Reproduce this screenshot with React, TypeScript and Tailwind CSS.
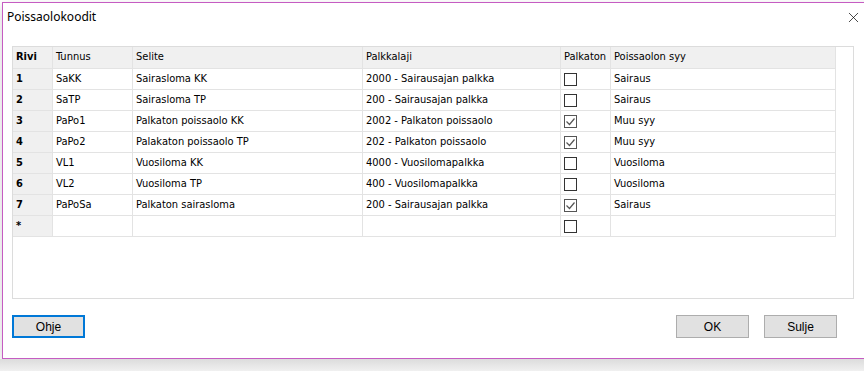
import { X } from 'lucide-react';

type Row = {
  rivi: string;
  tunnus: string;
  selite: string;
  palkkalaji: string;
  palkaton: boolean;
  syy: string;
};

const rows: Row[] = [
  { rivi: '1', tunnus: 'SaKK', selite: 'Sairasloma KK', palkkalaji: '2000 - Sairausajan palkka', palkaton: false, syy: 'Sairaus' },
  { rivi: '2', tunnus: 'SaTP', selite: 'Sairasloma TP', palkkalaji: '200 - Sairausajan palkka', palkaton: false, syy: 'Sairaus' },
  { rivi: '3', tunnus: 'PaPo1', selite: 'Palkaton poissaolo KK', palkkalaji: '2002 - Palkaton poissaolo', palkaton: true, syy: 'Muu syy' },
  { rivi: '4', tunnus: 'PaPo2', selite: 'Palakaton poissaolo TP', palkkalaji: '202 - Palkaton poissaolo', palkaton: true, syy: 'Muu syy' },
  { rivi: '5', tunnus: 'VL1', selite: 'Vuosiloma KK', palkkalaji: '4000 - Vuosilomapalkka', palkaton: false, syy: 'Vuosiloma' },
  { rivi: '6', tunnus: 'VL2', selite: 'Vuosiloma TP', palkkalaji: '400 - Vuosilomapalkka', palkaton: false, syy: 'Vuosiloma' },
  { rivi: '7', tunnus: 'PaPoSa', selite: 'Palkaton sairasloma', palkkalaji: '200 - Sairausajan palkka', palkaton: true, syy: 'Sairaus' },
];

const cols = 'grid grid-cols-[40px_80px_230px_198px_50px_225px] w-[823px]';
const cell = 'border-r border-b border-[#e3e3e3] pl-[3px] flex items-center overflow-hidden whitespace-nowrap';

const CheckBox = ({ checked }: { checked: boolean }) => (
  <div
    className={`w-[13px] h-[13px] bg-white border flex items-center justify-center ${
      checked ? 'border-[#555]' : 'border-[#333]'
    }`}
  >
    {checked && (
      <svg width="11" height="11" viewBox="0 0 11 11">
        <polyline points="1.5,5.5 4.5,8.5 9.5,2.5" fill="none" stroke="#555" strokeWidth="1.2" />
      </svg>
    )}
  </div>
);

const Button = ({ label, focused }: { label: string; focused?: boolean }) => (
  <div
    className={`w-[73px] h-[23px] bg-[#e1e1e1] flex items-center justify-center text-[12px] text-black ${
      focused ? 'border-2 border-[#0078d7]' : 'border border-[#adadad]'
    }`}
    style={{ fontFamily: '"Liberation Sans", Arial, sans-serif' }}
  >
    {label}
  </div>
);

export default function App() {
  return (
    <div className="w-[864px] h-[371px] bg-white overflow-hidden flex flex-col">
      <div className="pl-[2px] pt-[2px]">
        <div className="w-[900px] h-[357px] border-l border-t border-b border-[#c55cc2] bg-white flex flex-col shadow-[0_4px_10px_rgba(0,0,0,0.18)]">
          {/* title bar */}
          <div className="h-[27px] flex items-center justify-between pl-[4px] w-[861px]">
            <span
              className="text-[12px] text-black"
              style={{ fontFamily: '"Noto Sans", "Open Sans", sans-serif' }}
            >
              Poissaolokoodit
            </span>
            <X size={17} strokeWidth={1} className="text-black mr-[2px] mt-[1px]" />
          </div>

          {/* grid panel */}
          <div
            className="ml-[9px] mt-[16px] w-[842px] h-[253px] border border-[#dcdcdc] bg-white text-[11px] text-black"
            style={{ fontFamily: '"DejaVu Sans Condensed", "DejaVu Sans", sans-serif' }}
          >
            <div className={`${cols} h-[22px] bg-[#f0f0f0]`}>
              <div className={`${cell} font-bold`}>Rivi</div>
              <div className={cell}>Tunnus</div>
              <div className={cell}>Selite</div>
              <div className={cell}>Palkkalaji</div>
              <div className={`${cell} pl-[2px]`}>Palkaton</div>
              <div className={cell}>Poissaolon syy</div>
            </div>
            {rows.map((r) => (
              <div key={r.rivi} className={`${cols} h-[21px]`}>
                <div className={`${cell} font-bold bg-[#f0f0f0]`}>{r.rivi}</div>
                <div className={cell}>{r.tunnus}</div>
                <div className={cell}>{r.selite}</div>
                <div className={cell}>{r.palkkalaji}</div>
                <div className={cell}>
                  <CheckBox checked={r.palkaton} />
                </div>
                <div className={cell}>{r.syy}</div>
              </div>
            ))}
            <div className={`${cols} h-[21px]`}>
              <div className={`${cell} font-bold bg-[#f0f0f0]`}>*</div>
              <div className={cell} />
              <div className={cell} />
              <div className={cell} />
              <div className={cell}>
                <CheckBox checked={false} />
              </div>
              <div className={cell} />
            </div>
          </div>

          {/* buttons */}
          <div className="mt-[16px] ml-[9px] w-[825px] flex items-center">
            <Button label="Ohje" focused />
            <div className="flex-1" />
            <div className="flex gap-[15px]">
              <Button label="OK" />
              <Button label="Sulje" />
            </div>
          </div>
        </div>
      </div>
      <div className="flex-1 bg-gradient-to-b from-[#dcdcdc] to-[#f0f0f0]" />
    </div>
  );
}
